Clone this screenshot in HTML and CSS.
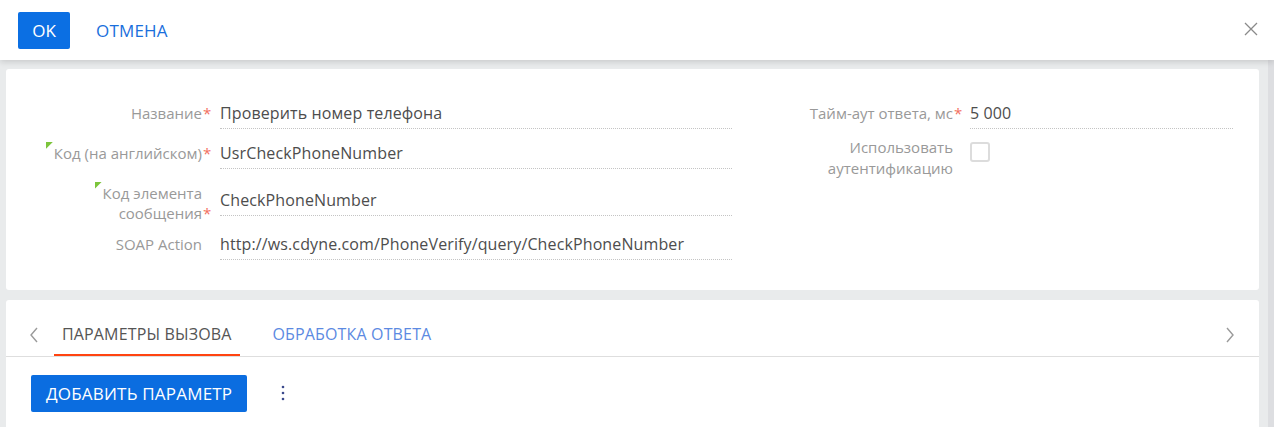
FILE: index.html
```html
<!DOCTYPE html>
<html lang="ru">
<head>
<meta charset="utf-8">
<title>SOAP</title>
<link rel="stylesheet" href="styles.css">
</head>
<body>
<header class="topbar">
  <button class="btn-ok">OK</button>
  <button class="btn-cancel">ОТМЕНА</button>
  <span class="spacer"></span>
  <svg class="close" width="14" height="14" viewBox="0 0 14 14"><path d="M1 1L13 13M13 1L1 13" stroke="#8a8a8a" stroke-width="1.3" fill="none"/></svg>
</header>
<div class="workspace">
  <main class="content">
    <section class="card form-card">
      <div class="col col-left">
        <div class="row">
          <div class="label"><span class="ltext">Название</span><span class="star">*</span></div>
          <div class="field">Проверить номер телефона</div>
        </div>
        <div class="row">
          <div class="label"><span class="ltext"><span class="mark"></span>Код (на английском)</span><span class="star">*</span></div>
          <div class="field">UsrCheckPhoneNumber</div>
        </div>
        <div class="row row-tall">
          <div class="label label-pad"><span class="ltext"><span class="mark"></span>Код элемента сообщения</span><span class="star">*</span></div>
          <div class="field">CheckPhoneNumber</div>
        </div>
        <div class="row">
          <div class="label"><span class="ltext">SOAP Action</span><span class="star"></span></div>
          <div class="field">http://ws.cdyne.com/PhoneVerify/query/CheckPhoneNumber</div>
        </div>
      </div>
      <div class="col col-right">
        <div class="row">
          <div class="label"><span class="ltext">Тайм-аут ответа, мс</span><span class="star">*</span></div>
          <div class="field field-right">5 000</div>
        </div>
        <div class="row row-check">
          <div class="label label-check"><span class="ltext">Использовать аутентификацию</span><span class="star"></span></div>
          <span class="checkbox"></span>
        </div>
      </div>
    </section>
    <section class="card tabs-card">
      <nav class="tabbar">
        <svg class="chev" width="10" height="16" viewBox="0 0 10 16"><path d="M8 1L2 8L8 15" stroke="#9a9a9a" stroke-width="1.4" fill="none"/></svg>
        <span class="tab tab-active">ПАРАМЕТРЫ ВЫЗОВА</span>
        <span class="tab">ОБРАБОТКА ОТВЕТА</span>
        <span class="spacer"></span>
        <svg class="chev" width="10" height="16" viewBox="0 0 10 16"><path d="M2 1L8 8L2 15" stroke="#9a9a9a" stroke-width="1.4" fill="none"/></svg>
      </nav>
      <div class="toolbar">
        <button class="btn-add">ДОБАВИТЬ ПАРАМЕТР</button>
        <svg class="kebab" width="4" height="16" viewBox="0 0 4 16"><circle cx="2" cy="2" r="1.3" fill="#3b4a8c"/><circle cx="2" cy="8" r="1.3" fill="#3b4a8c"/><circle cx="2" cy="14" r="1.3" fill="#3b4a8c"/></svg>
      </div>
    </section>
  </main>
  <div class="scrolltrack"></div>
</div>
</body>
</html>
```
FILE: styles.css
```css
* { box-sizing: border-box; }
html, body { margin: 0; padding: 0; }
body {
  width: 1274px;
  height: 427px;
  overflow: hidden;
  background: #e9ebec;
  font-family: "Open Sans", "Liberation Sans", sans-serif;
}
button { font-family: inherit; border: none; cursor: pointer; }

.topbar {
  position: relative;
  z-index: 2;
  height: 60px;
  background: #fff;
  display: flex;
  align-items: center;
  padding: 0 16px 0 18px;
  box-shadow: 0 2px 6px rgba(0, 0, 0, 0.14);
}
.btn-ok {
  width: 52px;
  height: 37px;
  background: #0b6fe3;
  color: #fff;
  font-size: 17px;
  border-radius: 2px;
  padding: 0;
}
.btn-cancel {
  margin-left: 18px;
  background: none;
  color: #1a6fdc;
  font-size: 17px;
  letter-spacing: 0.2px;
  padding: 0 8px;
  height: 37px;
}
.spacer { flex: 1; }
.close { margin-top: -2px; }

.workspace {
  display: flex;
  height: 367px;
}
.content {
  flex: 1;
  padding: 9px 9px 0 6px;
}
.scrolltrack {
  width: 6px;
  background: #dddee1;
}

.card {
  background: #fff;
  border-radius: 3px;
}
.form-card {
  display: flex;
  height: 221px;
  padding: 28px 26px 0 36px;
}
.col-left { width: 690px; }
.col-right { margin-left: 61px; }

.row {
  display: flex;
  align-items: center;
  min-height: 32px;
  margin-bottom: 8px;
}
.row-tall { margin-bottom: 5px; }
.label {
  width: 168px;
  display: flex;
  align-items: flex-end;
  color: #999;
  font-size: 15px;
  line-height: 20px;
}
.label-pad { padding-top: 6px; }
.ltext { flex: 1; text-align: right; }
.star {
  width: 8px;
  flex: none;
  color: #f3705e;
  font-size: 15px;
  padding-left: 1px;
}
.mark {
  display: inline-block;
  width: 7px;
  height: 7px;
  margin-right: 1px;
  vertical-align: top;
  margin-top: -1px;
  background: #7cc53b;
  clip-path: polygon(0 0, 100% 0, 0 100%);
}
.field {
  width: 512px;
  margin-left: 10px;
  height: 32px;
  border-bottom: 1px dotted #c4c4c4;
  color: #4d4d4d;
  font-size: 16px;
  letter-spacing: 0.12px;
  line-height: 20px;
  padding-top: 6px;
}
.field-right { width: 263px; margin-left: 9px; }

.row-check { align-items: flex-start; }
.label-check { line-height: 21px; }
.checkbox {
  margin: 5px 0 0 9px;
  width: 20px;
  height: 20px;
  border: 2px solid #dcdcdc;
  border-radius: 3px;
}

.tabs-card {
  margin-top: 10px;
  height: 140px;
}
.tabbar {
  display: flex;
  height: 57px;
  border-bottom: 1px solid #dedede;
  padding: 0 24px 0 23px;
}
.chev { margin-top: 27px; flex: none; }
.tab {
  margin-left: 15px;
  padding: 24px 8px 0;
  height: 56px;
  font-size: 16px;
  letter-spacing: 0.15px;
  line-height: 20px;
  color: #5c8ae2;
}
.tab + .tab { margin-left: 25px; }
.tab-active {
  color: #555;
  border-bottom: 2px solid #ff4310;
}

.toolbar {
  display: flex;
  align-items: center;
  padding: 18px 25px 0;
}
.btn-add {
  height: 37px;
  padding: 0 15px;
  background: #0b6de0;
  color: #fff;
  font-size: 17px;
  letter-spacing: 0.2px;
  border-radius: 2px;
}
.kebab { margin-left: 34px; margin-top: -1px; }
```
